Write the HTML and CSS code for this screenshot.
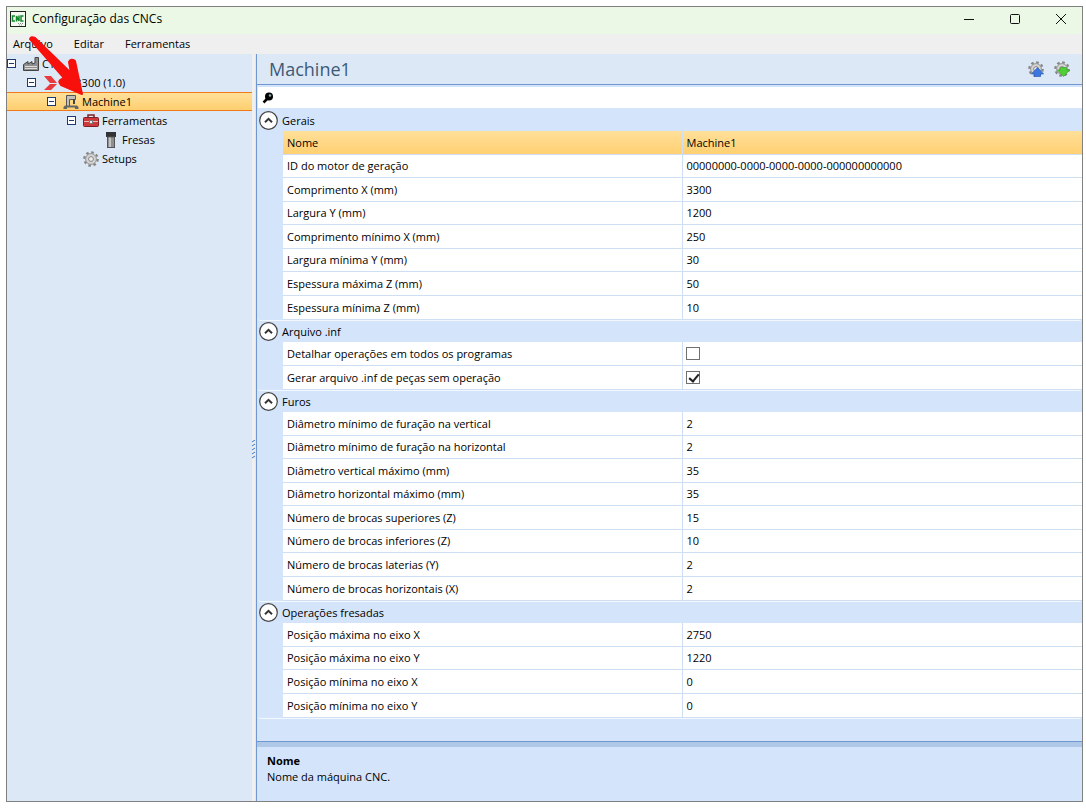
FILE: index.html
```
<!DOCTYPE html>
<html lang="pt-BR">

<head>
    <meta charset="UTF-8">
    <meta name="viewport" content="width=device-width, initial-scale=1.0">
    <title>Configuração das CNCs</title>
    <link rel="stylesheet" href="styles.css">
</head>

<body>
    <!-- shared icon shapes -->
    <svg class="defs" width="0" height="0">
        <symbol id="gear" viewBox="0 0 16 16">
            <circle cx="8" cy="8" r="6.6" fill="none" stroke="#858585" stroke-width="2.4" stroke-dasharray="2.6 2.58" />
            <circle cx="8" cy="8" r="5.4" fill="#d4d4d4" stroke="#949494" stroke-width="1" />
            <circle cx="8" cy="8" r="2.4" fill="#eee" stroke="#858585" stroke-width="1" />
        </symbol>
        <symbol id="chevron" viewBox="0 0 19 19">
            <circle cx="9.5" cy="9.5" r="8.8" fill="#fff" stroke="#444" stroke-width="1.2" />
            <path d="M6 11.2L9.5 7.8L13 11.2" fill="none" stroke="#333" stroke-width="2" />
        </symbol>
    </svg>

    <div class="window">
        <header class="titlebar">
            <svg class="appIcon" viewBox="0 0 16 16">
                <rect x=".5" y=".5" width="15" height="15" fill="#f4fbf1" stroke="#222" />
                <path d="M5 5H2.5V10H5M6.5 10.500V5L9 10V4.500M13.500 5H11V10H13.500" fill="none" stroke="#128a2c" stroke-width="1.500" />
                <path d="M8 12.500h6M9 14h4" stroke="#888" stroke-dasharray="1 1" />
            </svg>
            <span class="caption">Configuração das CNCs</span>
            <div class="windowButtons">
                <button type="button" aria-label="Minimizar"><svg viewBox="0 0 12 12"><path d="M1 6.500H11" /></svg></button>
                <button type="button" aria-label="Maximizar"><svg viewBox="0 0 12 12"><rect x="1.500" y="1.500" width="9" height="9" rx="1" /></svg></button>
                <button type="button" aria-label="Fechar"><svg viewBox="0 0 12 12"><path d="M1 1L11 11M11 1L1 11" /></svg></button>
            </div>
        </header>

        <nav class="menubar">
            <button type="button">Arquivo</button>
            <button type="button">Editar</button>
            <button type="button">Ferramentas</button>
        </nav>

        <div class="content">
            <aside class="sidebar">
                <ul class="tree">
                    <li>
                        <div class="node">
                            <button type="button" class="expander" aria-label="Recolher"></button>
                            <svg class="icon" viewBox="0 0 16 16">
                                <path d="M.5 14.500V8.500L5 5.500V8L9 5.500V8L12 7V1.500H15.500V14.500Z" fill="#8e8e8e" stroke="#444" />
                                <path d="M2 10.500H14M2 12.500H14" stroke="#ddd" />
                            </svg>
                            <span>CYI</span>
                        </div>
                        <ul>
                            <li>
                                <div class="node">
                                    <button type="button" class="expander" aria-label="Recolher"></button>
                                    <svg class="icon" viewBox="0 0 16 16">
                                        <path d="M1 1H8L14 8H7ZM7 9H14L8 15H1Z" fill="#e8393c" />
                                    </svg>
                                    <span>Vn3300 (1.0)</span>
                                </div>
                                <ul>
                                    <li>
                                        <div class="node selected">
                                            <button type="button" class="expander" aria-label="Recolher"></button>
                                            <svg class="icon" viewBox="0 0 16 16">
                                                <path d="M3.500 12V1.500H12.500V5.500H6.500V12" fill="#c4c0b8" stroke="#555" />
                                                <path d="M11 5V10" stroke="#444" stroke-width="2" />
                                                <path d="M2 11.500H14L15.500 13V15H12V13.500H4V15H.5V13Z" fill="#666" />
                                            </svg>
                                            <span>Machine1</span>
                                        </div>
                                        <ul>
                                            <li>
                                                <div class="node">
                                                    <button type="button" class="expander" aria-label="Recolher"></button>
                                                    <svg class="icon" viewBox="0 0 16 16">
                                                        <path d="M5 4.500V2H11V4.500" fill="none" stroke="#7c2224" stroke-width="1.500" />
                                                        <rect x=".5" y="4.500" width="15" height="9" rx="1" fill="#d0393b" stroke="#7c2224" />
                                                        <path d="M1 8.500H15" stroke="#f0b5b5" />
                                                        <rect x="6.500" y="7.500" width="3" height="3" fill="#eee" stroke="#777" />
                                                    </svg>
                                                    <span>Ferramentas</span>
                                                </div>
                                                <ul>
                                                    <li>
                                                        <div class="node leaf">
                                                            <svg class="icon" viewBox="0 0 16 16">
                                                                <rect x="3" y="0" width="10" height="5" fill="#333" />
                                                                <rect x="4.500" y="5" width="7" height="10.500" fill="#909090" stroke="#555" />
                                                                <path d="M7 5.500V15" stroke="#c4c4c4" stroke-width="2" />
                                                            </svg>
                                                            <span>Fresas</span>
                                                        </div>
                                                    </li>
                                                </ul>
                                            </li>
                                            <li>
                                                <div class="node leaf">
                                                    <svg class="icon"><use href="#gear" /></svg>
                                                    <span>Setups</span>
                                                </div>
                                            </li>
                                        </ul>
                                    </li>
                                </ul>
                            </li>
                        </ul>
                    </li>
                </ul>
            </aside>

            <div class="splitter">
                <svg viewBox="0 0 3 20"><path d="M0 2L3 0M0 6L3 4M0 10L3 8M0 14L3 12M0 18L3 16" stroke="#3b73c4" /></svg>
            </div>

            <main class="panel">
                <div class="panelHeader">
                    <h1>Machine1</h1>
                    <button type="button" class="tool" aria-label="Exportar">
                        <svg viewBox="0 0 16 16"><use href="#gear" /><path d="M9.500 6.500L15.700 13H12.500V15.700H6.500V13H3.300Z" fill="#3c78e0" stroke="#2458b8" stroke-width=".6" /></svg>
                    </button>
                    <button type="button" class="tool" aria-label="Importar">
                        <svg viewBox="0 0 16 16"><use href="#gear" /><path d="M6.500 6.500H12.500V9H15.700L9.500 15.500L3.300 9H6.500Z" fill="#50d033" stroke="#2e9c1c" stroke-width=".6" /></svg>
                    </button>
                </div>

                <div class="grid">
                    <label class="search">
                        <svg viewBox="0 0 12 12"><circle cx="7" cy="4.500" r="4" /><path d="M5 7L1.500 10.500" stroke="#000" stroke-width="2.500" /><circle cx="8" cy="3.500" r="1.300" fill="#8aa" /></svg>
                        <input type="text" aria-label="Pesquisar">
                    </label>

                    <section class="category">
                        <h2><button type="button" aria-label="Recolher Gerais"><svg><use href="#chevron" /></svg></button>Gerais</h2>
                        <table>
                            <tr class="selected"><th>Nome</th><td>Machine1</td></tr>
                            <tr><th>ID do motor de geração</th><td>00000000-0000-0000-0000-000000000000</td></tr>
                            <tr><th>Comprimento X (mm)</th><td>3300</td></tr>
                            <tr><th>Largura Y (mm)</th><td>1200</td></tr>
                            <tr><th>Comprimento mínimo X (mm)</th><td>250</td></tr>
                            <tr><th>Largura mínima Y (mm)</th><td>30</td></tr>
                            <tr><th>Espessura máxima Z (mm)</th><td>50</td></tr>
                            <tr><th>Espessura mínima Z (mm)</th><td>10</td></tr>
                        </table>
                    </section>

                    <section class="category">
                        <h2><button type="button" aria-label="Recolher Arquivo .inf"><svg><use href="#chevron" /></svg></button>Arquivo .inf</h2>
                        <table>
                            <tr><th><label for="detalhar">Detalhar operações em todos os programas</label></th><td><input type="checkbox" id="detalhar"></td></tr>
                            <tr><th><label for="gerar">Gerar arquivo .inf de peças sem operação</label></th><td><input type="checkbox" id="gerar" checked></td></tr>
                        </table>
                    </section>

                    <section class="category">
                        <h2><button type="button" aria-label="Recolher Furos"><svg><use href="#chevron" /></svg></button>Furos</h2>
                        <table>
                            <tr><th>Diâmetro mínimo de furação na vertical</th><td>2</td></tr>
                            <tr><th>Diâmetro mínimo de furação na horizontal</th><td>2</td></tr>
                            <tr><th>Diâmetro vertical máximo (mm)</th><td>35</td></tr>
                            <tr><th>Diâmetro horizontal máximo (mm)</th><td>35</td></tr>
                            <tr><th>Número de brocas superiores (Z)</th><td>15</td></tr>
                            <tr><th>Número de brocas inferiores (Z)</th><td>10</td></tr>
                            <tr><th>Número de brocas laterias (Y)</th><td>2</td></tr>
                            <tr><th>Número de brocas horizontais (X)</th><td>2</td></tr>
                        </table>
                    </section>

                    <section class="category">
                        <h2><button type="button" aria-label="Recolher Operações fresadas"><svg><use href="#chevron" /></svg></button>Operações fresadas</h2>
                        <table>
                            <tr><th>Posição máxima no eixo X</th><td>2750</td></tr>
                            <tr><th>Posição máxima no eixo Y</th><td>1220</td></tr>
                            <tr><th>Posição mínima no eixo X</th><td>0</td></tr>
                            <tr><th>Posição mínima no eixo Y</th><td>0</td></tr>
                        </table>
                    </section>
                </div>

                <footer class="description">
                    <strong>Nome</strong>
                    <p>Nome da máquina CNC.</p>
                </footer>
            </main>
        </div>

        <!-- red pointer to the selected machine -->
        <svg class="pointer" viewBox="0 0 60 64" aria-hidden="true">
            <path d="M2 4Q3 1 7 3L43 38L41 27Q43 23 47 26L54 59L33 50Q29 46 34 44L36 43Z" />
        </svg>
    </div>
</body>

</html>
```
FILE: styles.css
```
* {
    box-sizing: border-box;
}

body {
    margin: 6px 3px 10px 6px;
    background: #fff;
    color: #000;
    font-family: "Open Sans", "Noto Sans", sans-serif;
    font-size: 11px;
}

button {
    border: 0;
    padding: 0;
    background: none;
    color: inherit;
    font: inherit;
}

h1,
h2,
p,
ul {
    margin: 0;
    padding: 0;
    font-weight: normal;
    list-style: none;
}

.defs {
    position: absolute;
}

.window {
    position: relative;
    display: flex;
    flex-direction: column;
    min-height: calc(100vh - 16px);
    border: 1px solid #808080;
    background: #efefef;
}

/* title bar and menu */
.titlebar {
    display: flex;
    align-items: center;
    height: 27px;
    padding: 0 15px 4px 3px;
    background: #ebf8e5;
}

.appIcon {
    width: 16px;
    height: 16px;
    margin-right: 6px;
}

.caption {
    flex: 1;
    font-size: 12px;
}

.windowButtons {
    display: flex;
    gap: 34px;
}

.windowButtons svg {
    display: block;
    width: 12px;
    height: 12px;
    fill: none;
    stroke: #111;
}

.menubar {
    display: flex;
    gap: 21px;
    height: 20px;
    padding: 0 0 2px 6px;
}

.content {
    display: flex;
    flex: 1;
}

/* tree */
.sidebar {
    width: 245px;
    background: #dde8f6;
}

.node {
    display: flex;
    align-items: center;
    height: 19px;
    white-space: nowrap;
}

.tree ul .node {
    padding-left: 20px;
}

.tree ul ul .node {
    padding-left: 40px;
}

.tree ul ul ul .node {
    padding-left: 60px;
}

.tree ul ul ul .leaf {
    padding-left: 76px;
}

.tree ul ul ul ul .leaf {
    padding-left: 96px;
}

.node.selected {
    border: solid #f07818;
    border-width: 1px 0;
    background: linear-gradient(#ffe09a, #ffcf70);
}

.expander {
    position: relative;
    width: 9px;
    height: 9px;
    margin-right: 7px;
    border: 1px solid #1c3c70;
    background: #fff;
}

.expander::after {
    content: "";
    position: absolute;
    top: 3px;
    left: 1px;
    width: 5px;
    height: 1px;
    background: #1c3c70;
}

.icon {
    width: 16px;
    height: 16px;
    margin-right: 3px;
}

.splitter {
    display: flex;
    align-items: center;
    width: 4px;
    padding-top: 44px;
    border-right: 1px solid #dde8f6;
}

.splitter svg {
    width: 3px;
    height: 20px;
}

/* property panel */
.panel {
    display: flex;
    flex: 1;
    flex-direction: column;
    border-left: 1px solid #6f97d0;
    background: #d4e5fb;
}

.panelHeader {
    display: flex;
    align-items: center;
    gap: 10px;
    height: 31px;
    padding: 0 12px;
    border-bottom: 1px solid #6f97d0;
    background: #dde8f6;
}

.panelHeader h1 {
    flex: 1;
    color: #3b5a78;
    font-size: 18px;
}

.tool svg {
    display: block;
    width: 16px;
    height: 16px;
}

.grid {
    flex: 1;
    padding: 2px 0 0 1px;
}

.search {
    display: flex;
    align-items: center;
    height: 21px;
    margin-bottom: 2px;
    padding-left: 4px;
    background: #fff;
}

.search svg {
    width: 12px;
    height: 12px;
}

.search input {
    flex: 1;
    height: 18px;
    border: 0;
    outline: 0;
    background: none;
    font: inherit;
}

.category {
    padding-left: 25px;
    border-bottom: 1px solid #f4f9ff;
    border-radius: 3px;
}

.category h2 {
    display: flex;
    align-items: center;
    gap: 4px;
    height: 21px;
    margin-left: -24px;
    font-size: 11px;
}

.category h2 svg {
    display: block;
    width: 19px;
    height: 19px;
}

table {
    width: 100%;
    border-collapse: separate;
    border-spacing: 0;
    table-layout: fixed;
    background: #fff;
}

tr {
    height: 24px;
}

tr:nth-child(even) {
    height: 23px;
}

tr:last-child {
    height: 24px;
}

th,
td {
    padding: 0 4px;
    border-bottom: 1px solid #cfdff3;
    font-weight: normal;
    line-height: 16px;
    text-align: left;
}

th {
    border-right: 1px solid #cfdff3;
}

tr.selected {
    background: linear-gradient(#ffe09a, #ffcf70);
}

td input {
    appearance: none;
    display: block;
    width: 14px;
    height: 13px;
    margin: 0 0 0 -1px;
    border: 1px solid #707070;
    background: #fff;
}

td input:checked::after {
    content: "";
    display: block;
    width: 4px;
    height: 8px;
    margin: 0 0 0 4px;
    border: solid #222;
    border-width: 0 2px 2px 0;
    transform: rotate(40deg);
}

.description {
    height: 60px;
    padding: 6px 10px;
    border-top: 1px solid #6f97d0;
    box-shadow: inset 0 5px #b0c8e8;
}

.description strong {
    display: block;
    padding-top: 5px;
    line-height: 16px;
}

.description p {
    line-height: 16px;
}

.pointer {
    position: absolute;
    top: 28px;
    left: 21px;
    width: 60px;
    height: 64px;
    fill: #f8100c;
    stroke: #f8100c;
    stroke-width: 2px;
    stroke-linejoin: round;
}
```
